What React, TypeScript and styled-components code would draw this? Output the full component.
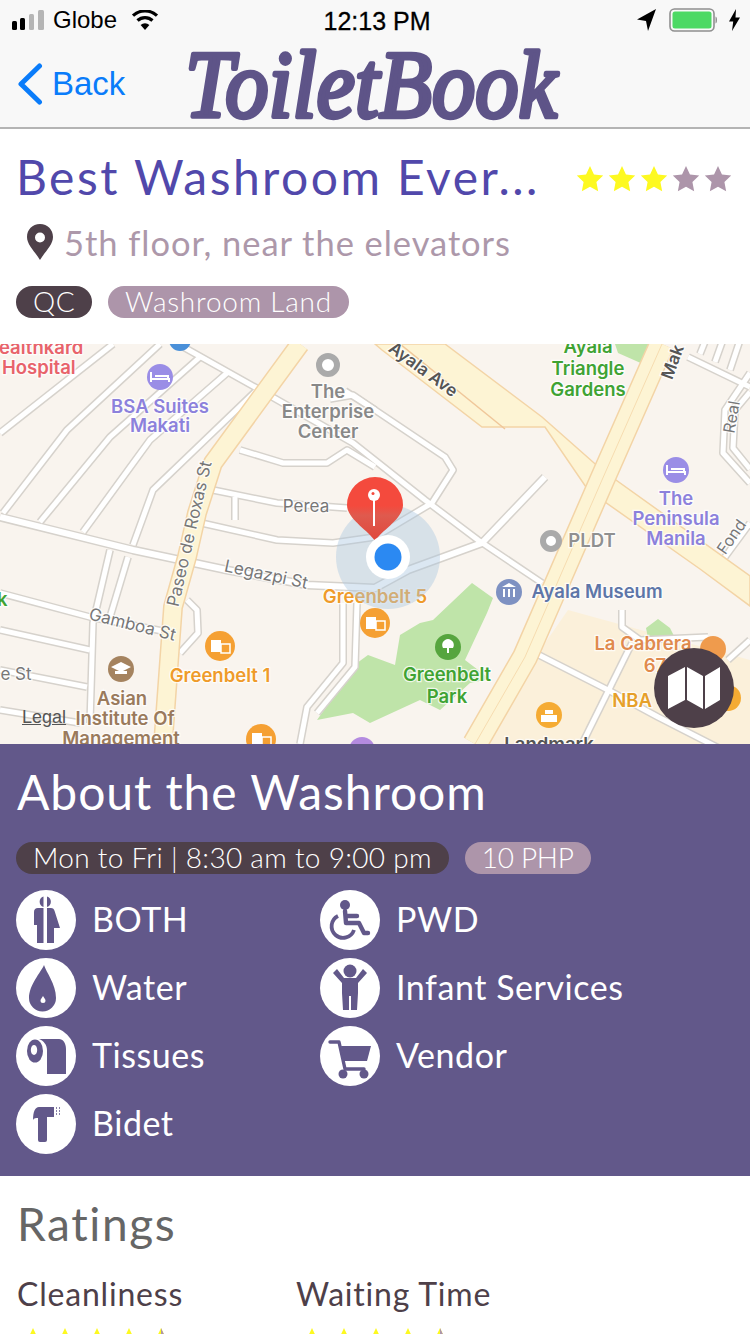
import React from "react";
import styled, { createGlobalStyle } from "styled-components";

const Global = createGlobalStyle`
  html, body { margin: 0; padding: 0; background: #fff; }
  body { width: 750px; height: 1334px; overflow: hidden; font-family: Lato, "Open Sans", sans-serif; }
`;
const Page = styled.div`width: 750px; height: 1334px; overflow: hidden; display: flex; flex-direction: column;`;
const Header = styled.header`background: #f8f8f8; border-bottom: 2px solid #b4b4b4; height: 127px; flex: none; display: flex; flex-direction: column;`;
const StatusBar = styled.div`height: 40px; flex: none; display: flex; align-items: center; padding: 0 10px 0 12px; font: 24px "Liberation Sans", sans-serif; color: #000; position: relative;`;
const Carrier = styled.span`margin: 0 14px 0 8px;`;
const Clock = styled.span`position: absolute; left: 0; right: 0; text-align: center; font-size: 25px; padding: 2px 0 0 4px; -webkit-text-stroke: 0.3px #000; pointer-events: none;`;
const StatusRight = styled.div`margin-left: auto; display: flex; align-items: center; gap: 12px;`;
const NavBar = styled.nav`flex: 1; display: flex; align-items: center; position: relative; padding-left: 17px;`;
const BackLink = styled.a`display: flex; align-items: center; gap: 9px; color: #0a7cfa; font: 33px "Liberation Sans", sans-serif;`;
const LogoArt = styled.svg`display: block; margin-left: 56px; flex: none; overflow: visible;`;
const Summary = styled.section`height: 215px; flex: none; padding: 0 16px; box-sizing: border-box; background: #fff; display: flex; flex-direction: column;`;
const TitleRow = styled.div`display: flex; align-items: center; justify-content: space-between; height: 92px; padding-top: 2px; box-sizing: border-box;`;
const Title = styled.h1`margin: 0; font-size: 48px; font-weight: 400; color: #5148ab; letter-spacing: 2.45px; white-space: nowrap;`;
const Stars = styled.div`display: flex; gap: 4px; margin: 6px 2px 0 0;`;
const Address = styled.div`display: flex; align-items: center; gap: 10px; padding-left: 10px; height: 42px; font-size: 34.5px; color: #ad98aa; letter-spacing: 0.95px;`;
const PillRow = styled.div<{ $gap: number; $top: number }>`display: flex; gap: ${p => p.$gap}px; margin-top: ${p => p.$top}px;`;
const Pill = styled.span<{ $dark?: boolean; $ls?: number }>`
  display: inline-flex; align-items: center; height: 32px; padding: 0 17px 2px; box-sizing: border-box; border-radius: 16px;
  background: ${p => (p.$dark ? "#4e4049" : "#ad95aa")}; color: #fff; font-size: 28px; font-weight: 300; white-space: nowrap; letter-spacing: ${p => p.$ls ?? 0.5}px;
`;
const MapPanel = styled.section`height: 400px; flex: none; position: relative; overflow: hidden; background: #f9f4ee;`;
const MapDrawing = styled.svg`display: block;`;
const MapButton = styled.button`
  position: absolute; left: 654px; top: 304px; width: 80px; height: 80px; border-radius: 50%; border: 0; padding: 0;
  background: #4e4049; display: flex; align-items: center; justify-content: center;
`;
const LegalLink = styled.span`position: absolute; left: 22px; top: 363px; font: 18px "Liberation Sans", sans-serif; color: #555; text-decoration: underline;`;
const About = styled.section`height: 432px; flex: none; box-sizing: border-box; background: #62588a; padding: 17px 16px 0; color: #fff;`;
const AboutTitle = styled.h2`margin: 0 0 0 1px; font-size: 48px; line-height: 62px; font-weight: 400; letter-spacing: 0.95px;`;
const Amenities = styled.div`display: grid; grid-template-columns: 304px 304px; grid-auto-rows: 60px; row-gap: 8px; margin-top: 16px;`;
const Amenity = styled.div`display: flex; align-items: center; gap: 16px; font-size: 34px; letter-spacing: 0.55px;`;
const AmenityLabel = styled.span`margin-bottom: 3px;`;
const Badge = styled.span`width: 60px; height: 60px; border-radius: 50%; background: #fff; flex: none; display: block;`;
const Ratings = styled.section`flex: 1; background: #fff; padding: 20px 17px 0; min-height: 0;`;
const RatingsTitle = styled.h2`margin: 0; font-size: 46px; line-height: 56px; font-weight: 400; color: #666; letter-spacing: 1.6px;`;
const RatingColumns = styled.div`display: grid; grid-template-columns: 279px 279px; margin-top: 21px;`;
const RatingName = styled.div`font-size: 32px; line-height: 42px; color: #4e4049; letter-spacing: 0.8px;`;
const RatingStars = styled.div`display: flex; gap: 4px; margin: 12px 0 0 2px;`;

const P = "#62588a";
const starPath = "M12 0.8l3.4 7.3 7.9 1-5.8 5.5 1.5 8-7-3.9-7 3.9 1.5-8L0.7 9.1l7.9-1z";
const Star = ({ color, half, size = 28 }: { color: string; half?: boolean; size?: number }) => (
  <svg width={size} height={size} viewBox="0 0 24 24">
    <path d={starPath} fill={color} />
    {half && <path d={starPath} fill="#ad95aa" style={{ clipPath: "inset(0 0 0 50%)" }} />}
  </svg>
);

const SignalBars = () => (
  <svg width="33" height="20" viewBox="0 0 33 20">
    <rect x="0" y="11" width="5" height="9" rx="1.5" fill="#000" />
    <rect x="8" y="8" width="5" height="12" rx="1.5" fill="#000" />
    <rect x="17" y="4" width="5" height="16" rx="1.5" fill="#b5b5b5" />
    <rect x="26" y="0" width="6" height="20" rx="1.5" fill="#b5b5b5" />
  </svg>
);
const Wifi = () => (
  <svg width="28" height="20" viewBox="0 0 28 20">
    <path d="M14 20l-4.4-5a6.5 6.5 0 0 1 8.8 0z" fill="#000" />
    <path d="M6.5 10.5a11 11 0 0 1 15 0M2 5.7a17.5 17.5 0 0 1 24 0" fill="none" stroke="#000" strokeWidth="3.2" />
  </svg>
);
const LocationArrow = () => (
  <svg width="20" height="22" viewBox="0 0 20 22"><path d="M19 0L0 10.5l9 1.5 2 10z" fill="#000" /></svg>
);
const Battery = () => (
  <svg width="48" height="24" viewBox="0 0 48 24">
    <rect x="1" y="1" width="44" height="22" rx="4.5" fill="none" stroke="#8f8f8f" strokeWidth="1.6" />
    <rect x="3.5" y="3.5" width="39" height="17" rx="2.5" fill="#4cd964" />
    <path d="M46.5 8.5c1.2.4 1.5 1.8 1.5 3.5s-.3 3.1-1.5 3.5z" fill="#8f8f8f" />
  </svg>
);
const Bolt = () => (
  <svg width="11" height="22" viewBox="0 0 11 22"><path d="M7 0L0 12.5h4.2L3 22l8-13.500H6.500z" fill="#000" /></svg>
);
const Chevron = () => (
  <svg width="26" height="42" viewBox="0 0 26 42">
    <path d="M22.500 3L4 21l18.500 18" fill="none" stroke="#0a7cfa" strokeWidth="5" strokeLinecap="round" strokeLinejoin="round" />
  </svg>
);
const Logo = () => (
  <LogoArt width="384" height="87" viewBox="0 0 384 87">
    <text x="4" y="77" fontFamily="'Liberation Serif', serif" fontStyle="italic" fontSize="96" fill="#5e5488"
      stroke="#5e5488" strokeWidth="4.500" strokeLinejoin="round" textLength="372" lengthAdjust="spacingAndGlyphs">ToiletBook</text>
  </LogoArt>
);
const LocationPin = () => (
  <svg width="28" height="36" viewBox="0 0 28 36">
    <path fillRule="evenodd" d="M14 0C6.300 0 1 5.600 1 13c0 8 8 14.500 13 23 5-8.500 13-15 13-23C27 5.600 21.700 0 14 0zm0 8.500a5 5 0 1 1 0 10 5 5 0 0 1 0-10z" fill="#4e4049" />
  </svg>
);
const icon = (children: React.ReactNode) => (
  <Badge><svg width="60" height="60" viewBox="0 0 60 60">{children}</svg></Badge>
);
const BothIcon = () => icon(<>
  <path d="M27.500 6.500a5.500 5.500 0 0 0 0 10.500zM27.500 18H22c-2.500 0-4 1.500-4 4v13h3v18h6.500z" fill={P} />
  <path d="M31 6.500a5.500 5.500 0 0 1 0 10.500zM31 18h4c2 0 3 1 3.600 3L44 38h-6v15h-7z" fill={P} />
</>);
const WaterIcon = () => icon(<>
  <path d="M28 7c2 7 12 19 12 33a13.500 13.500 0 0 1-27 0C13 27 25 14 28 7z" fill={P} />
  <path d="M27 38c1 2 2.500 3 2.500 4.500a2.500 2.500 0 0 1-5 0c0-1.500 1.500-2.500 2.500-4.500z" fill="#fff" />
</>);
const TissueIcon = () => icon(<>
  <path d="M23 13h20c4 0 7 4 7 10v25H31V24c0-5-3-9-8-11z" fill={P} />
  <ellipse cx="19" cy="25" rx="8" ry="11.500" fill={P} />
  <ellipse cx="18" cy="24" rx="3.200" ry="5" fill="#fff" />
</>);
const BidetIcon = () => icon(<>
  <path d="M23 13h15v10h-7v23a2 2 0 0 1-2 2h-5a2 2 0 0 1-2-2V24c-2 0-4 0-5 2 0-8 2-13 6-13z" fill={P} />
  <path d="M40 14h1M43 14h1M40 17h1M43 17h1M40 20h1M43 20h1" stroke={P} strokeWidth="1.400" />
</>);
const PwdIcon = () => icon(<>
  <circle cx="25" cy="15" r="5" fill={P} />
  <path d="M25 21l1 12h13l5 10h4M26 26h11" fill="none" stroke={P} strokeWidth="4.400" strokeLinecap="round" strokeLinejoin="round" />
  <path d="M18 26a11.500 11.500 0 1 0 16 14" fill="none" stroke={P} strokeWidth="3.800" />
</>);
const InfantIcon = () => icon(<>
  <circle cx="30" cy="13" r="6.500" fill={P} />
  <path d="M13 15l4-4 7 9h12l7-9 4 4-9 10v10l-1 17h-6V38h-2v14h-6l-1-17V25z" fill={P} />
</>);
const CartIcon = () => icon(<>
  <path d="M10 16h9l6 27h19" fill="none" stroke={P} strokeWidth="3.400" strokeLinecap="round" strokeLinejoin="round" />
  <path d="M21 20h30l-4 15H24z" fill={P} />
  <circle cx="23" cy="48" r="4.500" fill={P} /><circle cx="44" cy="48" r="4.500" fill={P} />
</>);

const road = (d: string, w = 6) => ({ d, w });
const roads = [
  road("M0 89L113 0"), road("M3 169L67 86L160 0"), road("M40 178L110 93L200 13"), road("M83 188L150 96L227 29"),
  road("M133 201L153 146L257 46"), road("M178 0L260 46L353 99L425 156L478 196L542 239", 6),
  road("M0 173L133 206L227 226L307 241L375 244L408 226L482 199L545 133", 7),
  road("M197 178L277 196L333 199L375 193L432 159L453 126L445 113L375 66L345 47", 6),
  road("M213 146L277 159L347 164"), road("M235 153V176"), road("M240 106L283 119L327 119L347 106L375 123"),
  road("M110 206L93 279L90 379"), road("M128 213L110 273"), road("M0 249L90 273L173 289"),
  road("M0 286L90 306"), road("M0 326L87 343"), road("M0 366L80 379"),
  road("M187 256L197 266L198 289L180 309"), road("M343 259V319L307 363L300 400"), road("M357 259L355 323L317 369"),
  road("M622 266V283L640 296L708 293"), road("M535 309L608 346L658 373L750 420"), road("M632 299L582 400"), road("M728 316L750 296"),
  road("M750 29L725 66L723 109L750 139"), road("M750 48L735 66L733 104L750 125"), road("M688 13L750 43"),
  road("M725 213L750 179"), road("M700 10L708 -10M715 18L725 -10M730 26L742 -10"), road("M330 55L353 51L375 66"),
];
type L = { t: string; x: number; y: number; c: string; fs?: number; w?: number; r?: number; a?: string };
const labels: L[] = [
  { t: "ealthkard", x: -1, y: 10, c: "#e8636b", a: "start" }, { t: "Hospital", x: 2, y: 30, c: "#e8636b", a: "start" },
  { t: "BSA Suites", x: 160, y: 69, c: "#8c81dc" }, { t: "Makati", x: 160, y: 88, c: "#8c81dc" },
  { t: "The", x: 328, y: 54, c: "#888" }, { t: "Enterprise", x: 328, y: 74, c: "#888" }, { t: "Center", x: 328, y: 94, c: "#888" },
  { t: "Ayala", x: 588, y: 9, c: "#3fa333" }, { t: "Triangle", x: 588, y: 31, c: "#3fa333" }, { t: "Gardens", x: 588, y: 52, c: "#3fa333" },
  { t: "The", x: 676, y: 161, c: "#8c81dc" }, { t: "Peninsula", x: 676, y: 181, c: "#8c81dc" }, { t: "Manila", x: 676, y: 201, c: "#8c81dc" },
  { t: "PLDT", x: 592, y: 203, c: "#909090" }, { t: "Ayala Museum", x: 597, y: 254, c: "#5e76a8" },
  { t: "Greenbelt 5", x: 375, y: 259, c: "#ef9b2a" }, { t: "Greenbelt 1", x: 220, y: 338, c: "#ef9b2a" },
  { t: "Greenbelt", x: 447, y: 337, c: "#3fa333" }, { t: "Park", x: 447, y: 359, c: "#3fa333" },
  { t: "Asian", x: 122, y: 361, c: "#9a7a5c" }, { t: "Institute Of", x: 125, y: 381, c: "#9a7a5c" }, { t: "Management", x: 121, y: 401, c: "#9a7a5c" },
  { t: "La Cabrera", x: 643, y: 306, c: "#e08a4d" }, { t: "67", x: 655, y: 328, c: "#e08a4d" }, { t: "NBA", x: 632, y: 363, c: "#e6a02a" },
  { t: "Landmark", x: 549, y: 407, c: "#555" }, { t: "k", x: -3, y: 262, c: "#3fa333", a: "start" },
  { t: "Perea", x: 306, y: 168, c: "#777", fs: 17, w: 400 }, { t: "e St", x: 16, y: 336, c: "#777", fs: 17, w: 400 },
  { t: "Legazpi St", x: 265, y: 236, c: "#777", fs: 17, w: 400, r: 12 }, { t: "Gamboa St", x: 131, y: 286, c: "#777", fs: 17, w: 400, r: 14 },
  { t: "Paseo de Roxas St", x: 195, y: 191, c: "#777", fs: 17, w: 400, r: -77 },
  { t: "Ayala Ave", x: 420, y: 30, c: "#555", fs: 17, w: 600, r: 36 }, { t: "Mak", x: 678, y: 20, c: "#555", fs: 17, w: 600, r: -70 },
  { t: "Real", x: 737, y: 74, c: "#777", fs: 16, w: 400, r: -80 }, { t: "Fond", x: 736, y: 196, c: "#777", fs: 16, w: 400, r: -55 },
];
const Poi = ({ x, y, c, r = 13 }: { x: number; y: number; c: string; r?: number }) => <circle cx={x} cy={y} r={r} fill={c} />;
const BedPoi = ({ x, y }: { x: number; y: number }) => (
  <g><Poi x={x} y={y} c="#9a8de6" />
    <path d={`M${x - 9} ${y - 5}v10M${x - 9} ${y + 2}h18v3M${x - 5} ${y - 1}h13v3`} fill="none" stroke="#fff" strokeWidth="2" /></g>
);
const BagPoi = ({ x, y, c = "#f5a033" }: { x: number; y: number; c?: string }) => (
  <g><circle cx={x} cy={y} r={15} fill={c} />
    <path d={`M${x - 9} ${y + 6}v-12h10v12z`} fill="#fff" /><path d={`M${x + 1} ${y - 2}h9v9h-9z`} fill={c} stroke="#fff" strokeWidth="1.500" /></g>
);

const MapArt = () => (
  <MapDrawing width="750" height="400" viewBox="0 0 750 400" fontFamily="Inter, 'Liberation Sans', sans-serif" aria-label="Map">
    <defs>
      <linearGradient id="pinFill" x1="0" y1="0" x2="0" y2="1">
        <stop offset="0.45" stopColor="#f44a3d" /><stop offset="0.6" stopColor="#df5a4e" /><stop offset="1" stopColor="#e0483c" />
      </linearGradient>
    </defs>
    <rect width="750" height="400" fill="#f9f4ee" />
    <path d="M568 266L750 316V400H475z" fill="#fbf0da" />
    <path d="M472 239L493 254L487 269L465 316L490 335L470 339L440 366L420 356L370 379L353 369L317 376L357 319L368 311L395 321L400 291L420 279L433 276z" fill="#bfe4a9" />
    <path d="M615 0H662L652 24L618 9z" fill="#bfe4a9" />
    <path d="M646 284l12-9 12 9 4 8-26 2z" fill="#bfe4a9" />
    {roads.map((r, i) => <path key={"c" + i} d={r.d} fill="none" stroke="#d6d2cc" strokeWidth={r.w + 2} strokeLinejoin="round" />)}
    {roads.map((r, i) => <path key={"w" + i} d={r.d} fill="none" stroke="#fff" strokeWidth={r.w - 1} strokeLinejoin="round" />)}
    <path d="M300 0L213 119L197 169L187 213L173 263L163 400" fill="none" stroke="#f3d4a6" strokeWidth="20" strokeLinejoin="round" />
    <path d="M300 0L213 119L197 169L187 213L173 263L163 400" fill="none" stroke="#fdf4d4" strokeWidth="17" strokeLinejoin="round" />
    <path d="M445 0L542 73L602 126L750 232V262L700 225L588 146L545 83L482 83L382 6L375 0z" fill="#fdf4d4" stroke="#f3d4a6" strokeWidth="1.500" />
    <path d="M662 0L602 136L525 313L475 400" fill="none" stroke="#f3d4a6" strokeWidth="26" />
    <path d="M662 0L602 136L525 313L475 400" fill="none" stroke="#fdf4d4" strokeWidth="23" />
    <path d="M662 0L602 136L525 313L475 400" fill="none" stroke="#f6dcb0" strokeWidth="1" />
    <path d="M400 0L505 85" fill="none" stroke="#f0c79a" strokeWidth="1.500" />
    <circle cx="328" cy="21" r="9" fill="#fff" stroke="#aaa" strokeWidth="6" />
    <circle cx="551" cy="197" r="8" fill="#fff" stroke="#aaa" strokeWidth="6" />
    <circle cx="180" cy="-4" r="11" fill="#4a90d9" />
    <BedPoi x={160} y={33} /><BedPoi x={676} y={126} />
    <BagPoi x={220} y={302} /><BagPoi x={375} y={279} /><BagPoi x={261} y={395} />
    <Poi x={549} y={371} c="#f5ab33" /><path d="M541 371h16v7h-16zM545 366h8v4h-8z" fill="#fff" />
    <Poi x={509} y={248} c="#7e91c2" /><path d="M502 243l7-4 7 4zM503 245h2v8h-2zM508 245h2v8h-2zM513 245h2v8h-2z" fill="#fff" />
    <Poi x={121} y={325} c="#a5835f" /><path d="M111 323l10-5 10 5-10 5zM115 327h12v3h-12z" fill="#fff" />
    <Poi x={448} y={303} c="#56a53e" /><path d="M448 295a6 6 0 0 1 5 9h-4v5h-2v-5h-4a6 6 0 0 1 5-9z" fill="#fff" />
    <Poi x={713} y={305} c="#ef9b4d" /><Poi x={362} y={406} c="#b48be0" />
    <circle cx="728" cy="354" r="13" fill="#f5ab33" />
    {labels.map((l, i) => (
      <text key={i} x={l.x} y={l.y} fill={l.c} fontSize={l.fs ?? 18.500} fontWeight={l.w ?? 600}
        textAnchor={(l.a as "start") ?? "middle"} stroke="#ffffff" strokeOpacity="0.75" strokeWidth="2.500" paintOrder="stroke"
        transform={l.r ? `rotate(${l.r} ${l.x} ${l.y})` : undefined}>{l.t}</text>
    ))}
    <circle cx="388" cy="213" r="52" fill="#a9c6df" fillOpacity="0.42" />
    <path d="M375 197c-7-11-28-22-28-36a28 28 0 0 1 56 0c0 14-21 25-28 36z" fill="url(#pinFill)" />
    <circle cx="374" cy="151" r="6" fill="#fff" /><circle cx="373" cy="149.500" r="1.500" fill="#f44a3d" />
    <rect x="373" y="154" width="2" height="28" fill="#fff" />
    <circle cx="388" cy="213" r="22" fill="#fff" />
    <circle cx="388" cy="213" r="13.500" fill="#2b89f2" />
  </MapDrawing>
);
const FoldedMap = () => (
  <svg width="52" height="42" viewBox="0 0 52 42">
    <path d="M0 9L17 0V33L0 42zM19 0L35 9V42L19 33zM37 9L52 0V33L37 42z" fill="#fff" />
  </svg>
);
const items = [
  ["BOTH", BothIcon], ["PWD", PwdIcon], ["Water", WaterIcon], ["Infant Services", InfantIcon],
  ["Tissues", TissueIcon], ["Vendor", CartIcon], ["Bidet", BidetIcon],
] as const;

export default function App() {
  return (
    <Page>
      <Global />
      <Header>
        <StatusBar>
          <SignalBars /><Carrier>Globe</Carrier><Wifi /><Clock>12:13 PM</Clock>
          <StatusRight><LocationArrow /><Battery /><Bolt /></StatusRight>
        </StatusBar>
        <NavBar>
          <BackLink><Chevron />Back</BackLink>
          <Logo />
        </NavBar>
      </Header>
      <Summary>
        <TitleRow>
          <Title>Best Washroom Ever...</Title>
          <Stars>
            {[0, 1, 2].map(i => <Star key={i} color="#fdf921" />)}
            {[3, 4].map(i => <Star key={i} color="#ad95aa" />)}
          </Stars>
        </TitleRow>
        <Address><LocationPin />5th floor, near the elevators</Address>
        <PillRow $gap={16} $top={23}>
          <Pill $dark>QC</Pill>
          <Pill $ls={0.75}>Washroom Land</Pill>
        </PillRow>
      </Summary>
      <MapPanel>
        <MapArt />
        <LegalLink>Legal</LegalLink>
        <MapButton aria-label="Open map"><FoldedMap /></MapButton>
      </MapPanel>
      <About>
        <AboutTitle>About the Washroom</AboutTitle>
        <PillRow $gap={16} $top={19}>
          <Pill $dark $ls={0.3}>Mon to Fri | 8:30 am to 9:00 pm</Pill>
          <Pill $ls={-0.3}>10 PHP</Pill>
        </PillRow>
        <Amenities>
          {items.map(([label, Icon]) => <Amenity key={label}><Icon /><AmenityLabel>{label}</AmenityLabel></Amenity>)}
        </Amenities>
      </About>
      <Ratings>
        <RatingsTitle>Ratings</RatingsTitle>
        <RatingColumns>
          {["Cleanliness", "Waiting Time"].map(name => (
            <div key={name}>
              <RatingName>{name}</RatingName>
              <RatingStars>
                {[0, 1, 2, 3].map(i => <Star key={i} color="#fdf921" />)}
                <Star color="#fdf921" half />
              </RatingStars>
            </div>
          ))}
        </RatingColumns>
      </Ratings>
    </Page>
  );
}
